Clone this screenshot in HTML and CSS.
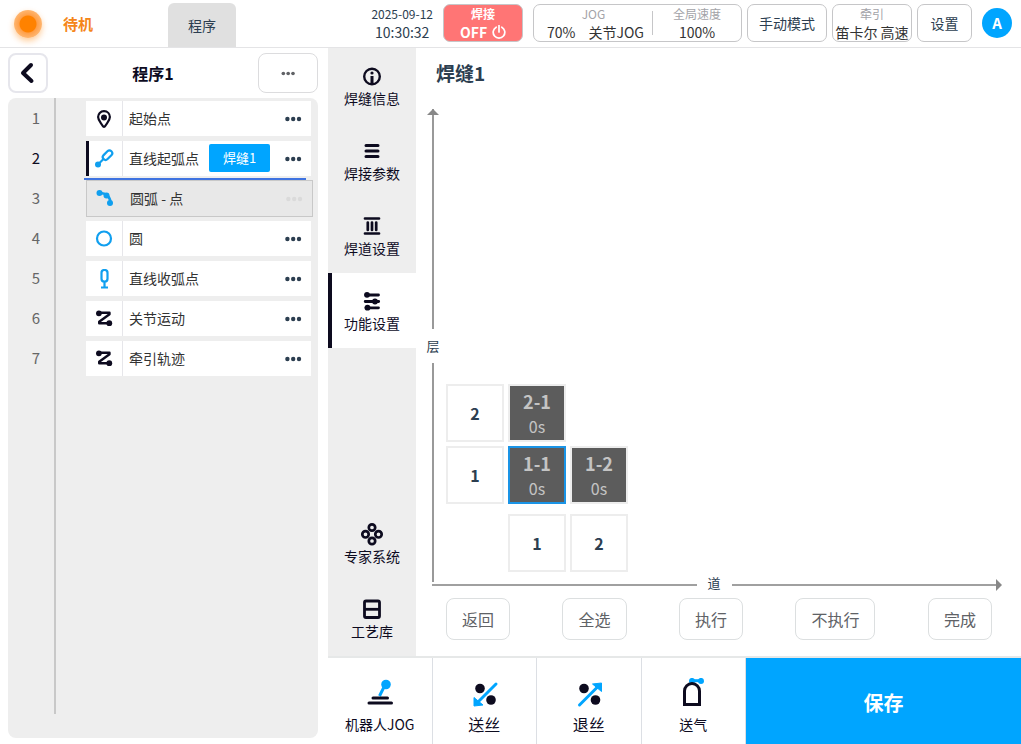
FILE: index.html
```html
<!DOCTYPE html>
<html lang="zh-CN">
<head>
    <meta charset="UTF-8">
    <meta name="viewport" content="width=device-width, initial-scale=1.0">
    <title>焊缝1</title>
    <link rel="stylesheet" href="styles.css">
</head>
<body>
    <!-- Shared icons -->
    <svg class="sprite" aria-hidden="true">
        <symbol id="icon-dots" viewBox="0 0 18 6">
            <circle cx="3.400" cy="3" r="2.200"/><circle cx="9.200" cy="3" r="2.200"/><circle cx="15" cy="3" r="2.200"/>
        </symbol>
        <symbol id="icon-path" viewBox="0 0 20 20">
            <path d="M4.500 3.800H15.500V5.200L5.200 12.800V14.300H15" fill="none" stroke="currentColor" stroke-width="2.400" stroke-linejoin="round"/>
            <circle cx="4.900" cy="4.300" r="2.900"/><circle cx="15.300" cy="14.200" r="2.900"/>
        </symbol>
    </svg>

    <!-- Top bar -->
    <header class="topbar">
        <span class="lamp"></span>
        <span class="status">待机</span>
        <a class="tab" href="#">程序</a>

        <div class="top-tools">
            <div class="clock">
                <span class="small">2025-09-12</span>
                <span>10:30:32</span>
            </div>
            <button class="top-box weld">
                <span class="small">焊接</span>
                <span class="weld-state">OFF
                    <svg class="power" viewBox="0 0 14 14"><path d="M4.200 2.200A5.800 5.800 0 1 0 9.800 2.200M7 .5V7" fill="none" stroke="currentColor" stroke-width="1.700" stroke-linecap="round"/></svg>
                </span>
            </button>
            <button class="top-box speed">
                <span class="speed-part">
                    <span class="small muted">JOG</span>
                    <span class="speed-values"><span>70%</span><span>关节JOG</span></span>
                </span>
                <span class="speed-part">
                    <span class="small muted">全局速度</span>
                    <span>100%</span>
                </span>
            </button>
            <button class="top-box mode">手动模式</button>
            <button class="top-box mode">
                <span class="small muted">牵引</span>
                <span class="value">笛卡尔 高速</span>
            </button>
            <button class="top-box settings">设置</button>
            <button class="avatar">A</button>
        </div>
    </header>

    <div class="page">
        <!-- Program list -->
        <section class="program">
            <div class="program-head">
                <button class="back" aria-label="返回">
                    <svg viewBox="0 0 20 22"><path d="M13 3 5 11l8.500 8" fill="none" stroke="currentColor" stroke-width="4" stroke-linecap="round" stroke-linejoin="round"/></svg>
                </button>
                <h1>程序1</h1>
                <button class="more" aria-label="更多">
                    <svg class="dots" viewBox="0 0 18 6"><use href="#icon-dots"/></svg>
                </button>
            </div>

            <div class="program-body">
                <ol class="steps">
                    <li class="step">
                        <span class="num">1</span>
                        <div class="card">
                            <span class="card-icon">
                                <svg viewBox="0 0 20 20"><path d="M10 2.200c-3.500 0-5.900 2.600-5.900 5.900 0 3.700 3.400 6.300 4.700 9 .5 1 1.900 1 2.400 0 1.300-2.700 4.700-5.300 4.700-9 0-3.300-2.400-5.900-5.900-5.900z" fill="none" stroke="currentColor" stroke-width="2.200"/><circle cx="10" cy="8.500" r="3"/></svg>
                            </span>
                            <span class="name">起始点</span>
                            <button class="card-more" aria-label="更多"><svg class="dots" viewBox="0 0 18 6"><use href="#icon-dots"/></svg></button>
                        </div>
                    </li>
                    <li class="step active">
                        <span class="num">2</span>
                        <div class="card">
                            <span class="card-icon blue">
                                <svg viewBox="0 0 20 20"><rect x="8" y="3.400" width="11" height="5.600" rx="2.800" transform="rotate(-45 13.500 6.200)" fill="none" stroke="currentColor" stroke-width="2.200"/><path d="M4 15.500 10 9.500" stroke="currentColor" stroke-width="2.200"/><circle cx="4" cy="15.500" r="3"/></svg>
                            </span>
                            <span class="name">直线起弧点</span>
                            <button class="tag">焊缝1</button>
                            <button class="card-more" aria-label="更多"><svg class="dots" viewBox="0 0 18 6"><use href="#icon-dots"/></svg></button>
                        </div>
                    </li>
                    <li class="step dragging">
                        <span class="num">3</span>
                        <div class="card">
                            <span class="card-icon blue">
                                <svg viewBox="0 0 20 20"><path d="M4 4Q15.500 4 15.500 15" fill="none" stroke="currentColor" stroke-width="2.600"/><circle cx="4.500" cy="4" r="3"/><circle cx="11.500" cy="6.500" r="3"/><circle cx="15" cy="14" r="3"/></svg>
                            </span>
                            <span class="name">圆弧 - 点</span>
                            <button class="card-more" aria-label="更多"><svg class="dots" viewBox="0 0 18 6"><use href="#icon-dots"/></svg></button>
                        </div>
                    </li>
                    <li class="step">
                        <span class="num">4</span>
                        <div class="card">
                            <span class="card-icon blue">
                                <svg viewBox="0 0 20 20"><circle cx="10" cy="9.500" r="7" fill="none" stroke="currentColor" stroke-width="2.200"/></svg>
                            </span>
                            <span class="name">圆</span>
                            <button class="card-more" aria-label="更多"><svg class="dots" viewBox="0 0 18 6"><use href="#icon-dots"/></svg></button>
                        </div>
                    </li>
                    <li class="step">
                        <span class="num">5</span>
                        <div class="card">
                            <span class="card-icon blue">
                                <svg viewBox="0 0 20 20"><rect x="7.500" y="1" width="6" height="11.500" rx="2.800" fill="none" stroke="currentColor" stroke-width="2.200"/><path d="M10.500 12.500V18.500M7 18.500h7" stroke="currentColor" stroke-width="2.200"/></svg>
                            </span>
                            <span class="name">直线收弧点</span>
                            <button class="card-more" aria-label="更多"><svg class="dots" viewBox="0 0 18 6"><use href="#icon-dots"/></svg></button>
                        </div>
                    </li>
                    <li class="step">
                        <span class="num">6</span>
                        <div class="card">
                            <span class="card-icon"><svg viewBox="0 0 20 20"><use href="#icon-path"/></svg></span>
                            <span class="name">关节运动</span>
                            <button class="card-more" aria-label="更多"><svg class="dots" viewBox="0 0 18 6"><use href="#icon-dots"/></svg></button>
                        </div>
                    </li>
                    <li class="step">
                        <span class="num">7</span>
                        <div class="card">
                            <span class="card-icon"><svg viewBox="0 0 20 20"><use href="#icon-path"/></svg></span>
                            <span class="name">牵引轨迹</span>
                            <button class="card-more" aria-label="更多"><svg class="dots" viewBox="0 0 18 6"><use href="#icon-dots"/></svg></button>
                        </div>
                    </li>
                </ol>
            </div>
        </section>

        <div class="workspace">
            <div class="workspace-main">
                <!-- Side menu -->
                <nav class="side">
                    <a href="#">
                        <svg viewBox="0 0 20 20"><circle cx="10" cy="10.500" r="7.800" fill="none" stroke="currentColor" stroke-width="2.400"/><circle cx="10" cy="7" r="1.600"/><path d="M10 10v7" stroke="currentColor" stroke-width="3"/></svg>
                        焊缝信息
                    </a>
                    <a href="#">
                        <svg viewBox="0 0 20 20"><path d="M4 4.500h12M4 10h12M4 15.500h12" stroke="currentColor" stroke-width="3" stroke-linecap="round"/></svg>
                        焊接参数
                    </a>
                    <a href="#">
                        <svg viewBox="0 0 20 20"><path d="M3 2.500h14M3 17.500h14M5.800 6.500v7.500M10 6.500v7.500M14.200 6.500v7.500" stroke="currentColor" stroke-width="2.700" stroke-linecap="round"/></svg>
                        焊道设置
                    </a>
                    <a class="current" href="#">
                        <svg viewBox="0 0 20 20"><path d="M4 4h12.500M3.200 10.500h13.500M4 16.800h12.500" stroke="currentColor" stroke-width="2.800" stroke-linecap="round"/><circle cx="5" cy="3.800" r="2.900"/><circle cx="13" cy="10.500" r="2.900"/><circle cx="5.500" cy="16.700" r="2.900"/></svg>
                        功能设置
                    </a>
                    <a class="side-low" href="#">
                        <svg class="wide" viewBox="0 0 24 24"><g fill="none" stroke="currentColor" stroke-width="2.700"><circle cx="12" cy="5.500" r="3.200"/><circle cx="5.500" cy="12.300" r="3.200"/><circle cx="18.500" cy="12.300" r="3.200"/><circle cx="12" cy="19" r="3.200"/></g></svg>
                        专家系统
                    </a>
                    <a href="#">
                        <svg viewBox="0 0 20 20"><rect x="2.500" y="2" width="15" height="16.500" rx="1.500" fill="none" stroke="currentColor" stroke-width="2.800"/><path d="M3 10.300h14" stroke="currentColor" stroke-width="2.800"/></svg>
                        工艺库
                    </a>
                </nav>

                <!-- Weld layers -->
                <main class="weld-area">
                    <h2>焊缝1</h2>
                    <div class="plot">
                        <div class="axis-y">
                            <span class="line with-arrow"></span>
                            <span class="axis-label">层</span>
                            <span class="line"></span>
                        </div>
                        <div class="beads">
                            <div class="bead-row">
                                <button class="bead">2</button>
                                <button class="bead off"><b>2-1</b><span>0s</span></button>
                            </div>
                            <div class="bead-row">
                                <button class="bead">1</button>
                                <button class="bead off selected"><b>1-1</b><span>0s</span></button>
                                <button class="bead off"><b>1-2</b><span>0s</span></button>
                            </div>
                            <div class="bead-row bead-foot">
                                <button class="bead">1</button>
                                <button class="bead">2</button>
                            </div>
                        </div>
                    </div>
                    <div class="axis-x">
                        <span class="line"></span>
                        <span class="axis-label">道</span>
                        <span class="line"></span>
                        <span class="arrow-right"></span>
                    </div>
                    <div class="actions">
                        <button>返回</button>
                        <button>全选</button>
                        <button>执行</button>
                        <button>不执行</button>
                        <button>完成</button>
                    </div>
                </main>
            </div>

            <!-- Bottom bar -->
            <footer class="bottom">
                <button class="tool">
                    <svg viewBox="0 0 30 30"><path class="blue" d="M14.500 18 20 7" stroke="currentColor" stroke-width="3"/><circle class="blue" cx="21" cy="6.500" r="4.800"/><path d="M8 20h14.500M4 25h22.500" stroke="currentColor" stroke-width="3" stroke-linecap="round"/></svg>
                    机器人JOG
                </button>
                <button class="tool large">
                    <svg viewBox="0 0 30 30"><circle cx="11" cy="10.500" r="4.800"/><circle cx="22" cy="22" r="4.800"/><path class="blue" d="M27 6 9 24" stroke="currentColor" stroke-width="3" stroke-linecap="round"/><path class="blue" d="M5 28V19.500l9 7.500z" stroke="currentColor" stroke-linejoin="round"/></svg>
                    送丝
                </button>
                <button class="tool large">
                    <svg viewBox="0 0 30 30"><circle cx="10" cy="10.500" r="4.800"/><circle cx="21.500" cy="22" r="4.800"/><path class="blue" d="M5.500 27 24 8.500" stroke="currentColor" stroke-width="3" stroke-linecap="round"/><path class="blue" d="M27.500 5V13.500l-9-7.500z" stroke="currentColor" stroke-linejoin="round"/></svg>
                    退丝
                </button>
                <button class="tool">
                    <svg viewBox="0 0 30 30"><path class="blue" d="M14 2.700h9" stroke="currentColor" stroke-width="3"/><circle class="blue" cx="14" cy="2.900" r="3"/><circle class="blue" cx="23" cy="2.900" r="3"/><path d="M6.500 26.500V13a7.500 7.500 0 0 1 15 0V26.500z" fill="none" stroke="currentColor" stroke-width="3"/></svg>
                    送气
                </button>
                <button class="save">保存</button>
            </footer>
        </div>
    </div>
</body>
</html>
```
FILE: styles.css
```css
/* Basic Reset */
* {
    margin: 0;
    padding: 0;
    box-sizing: border-box;
}

/* Global Styles */
body {
    display: flex;
    flex-direction: column;
    min-height: 100vh;
    font-family: "Noto Sans CJK SC", sans-serif;
    font-size: 14px;
    line-height: 18px;
    color: #2c3e50;
    background-color: #fff;
}

button {
    font: inherit;
    color: inherit;
    background-color: #fff;
    border: none;
    cursor: pointer;
}

a {
    color: inherit;
    text-decoration: none;
}

svg {
    display: block;
    fill: currentColor;
}

.sprite {
    display: none;
}

.blue {
    color: #109fef;
}

.small {
    font-size: 12px;
}

.muted {
    color: #a3a3a8;
}

/* Top Bar */
.topbar {
    display: flex;
    align-items: center;
    height: 48px;
    padding: 0 9px 0 14px;
    border-bottom: 1px solid #e4e4e6;
}

.lamp {
    width: 28px;
    height: 28px;
    border-radius: 50%;
    background: radial-gradient(circle, #ff8200 8px, #ffa04a 9px, #ffb670 14px);
    box-shadow: 0 3px 6px rgba(255, 130, 0, 0.4);
}

.status {
    margin-left: 21px;
    font-size: 15px;
    font-weight: bold;
    color: #f5861a;
}

.tab {
    align-self: flex-end;
    width: 68px;
    height: 44px;
    margin-left: 75px;
    border-radius: 6px 6px 0 0;
    background-color: #e0e0e0;
    line-height: 44px;
    text-align: center;
}

.top-tools {
    display: flex;
    align-items: center;
    gap: 5px;
    margin: 0 0 1px auto;
}

.clock {
    display: flex;
    flex-direction: column;
    align-items: center;
    margin-right: 5px;
}

.top-box {
    display: flex;
    flex-direction: column;
    align-items: center;
    justify-content: center;
    height: 38px;
    border: 1px solid #c6c6c8;
    border-radius: 7px;
    white-space: nowrap;
}

.weld {
    width: 80px;
    margin-right: 5px;
    background-color: #ff7575;
    color: #fff;
    font-weight: bold;
}

.weld-state {
    display: flex;
    align-items: center;
    gap: 5px;
}

.power {
    width: 14px;
    height: 14px;
}

.speed {
    flex-direction: row;
    width: 209px;
    color: #333;
}

.speed-part {
    display: flex;
    flex-direction: column;
    align-items: center;
    width: 88px;
}

.speed-part:first-child {
    position: relative;
    width: 119px;
}

.speed-part:first-child::after {
    content: "";
    position: absolute;
    top: 6px;
    right: 0;
    width: 1px;
    height: 24px;
    background-color: #c6c6c8;
}

.speed-values {
    display: flex;
    gap: 13px;
    padding-left: 4px;
}

.mode {
    width: 80px;
}

.value {
    color: #333;
}

.settings {
    width: 55px;
}

.avatar {
    width: 30px;
    height: 30px;
    margin-left: 5px;
    border-radius: 50%;
    background-color: #00a5ff;
    color: #fff;
    font-size: 15px;
    font-weight: bold;
}

/* Page */
.page {
    display: flex;
    flex: 1;
}

/* Program List */
.program {
    display: flex;
    flex-direction: column;
    width: 328px;
    padding: 5px 10px 6px 8px;
}

.program-head {
    display: flex;
    align-items: center;
    justify-content: space-between;
    height: 40px;
    margin-bottom: 5px;
}

.program-head h1 {
    font-size: 16px;
    color: #0d0b1f;
}

.back {
    display: flex;
    align-items: center;
    justify-content: center;
    width: 40px;
    height: 40px;
    border: 2px solid #e6e6ec;
    border-radius: 8px;
    color: #0d0b1f;
}

.back svg {
    width: 20px;
    height: 22px;
}

.more {
    display: flex;
    align-items: center;
    justify-content: center;
    width: 60px;
    height: 40px;
    border: 1px solid #dcdcde;
    border-radius: 8px;
    color: #606266;
}

.dots {
    width: 18px;
    height: 6px;
}

.more .dots {
    width: 16px;
    height: 5px;
}

.program-body {
    flex: 1;
    padding-bottom: 24px;
    border-radius: 8px;
    background: #eee;
}

.steps {
    display: flex;
    flex-direction: column;
    gap: 5px;
    height: 100%;
    padding: 3px 7px 0 0;
    background: linear-gradient(#c8c8c8, #c8c8c8) 46px 0 / 2px 100% no-repeat;
    list-style: none;
}

.step {
    position: relative;
    display: flex;
    align-items: center;
    height: 35px;
}

.num {
    width: 78px;
    padding: 0 22px 2px 0;
    font-size: 15px;
    text-align: center;
    color: #666;
}

.active .num {
    color: #0d0b1f;
}

.card {
    display: flex;
    flex: 1;
    align-items: center;
    height: 35px;
    background-color: #fff;
    color: #333;
}

.card-icon {
    display: flex;
    align-items: center;
    justify-content: center;
    align-self: stretch;
    width: 37px;
    border-right: 1px solid #e6e6ea;
    color: #0d0b1f;
}

.card-icon.blue {
    color: #109fef;
}

.card-icon svg {
    width: 20px;
    height: 20px;
}

.name {
    margin-left: 6px;
    padding-bottom: 2px;
}

.card-more {
    margin-left: auto;
    padding: 0 9px;
    background-color: transparent;
    color: #2c3e50;
}

.active .card {
    box-shadow: inset 3px 0 0 #0d0b1f;
}

.tag {
    height: 28px;
    margin: 0 0 1px 10px;
    padding: 0 14px;
    border-radius: 2px;
    background-color: #00a5ff;
    color: #fff;
    font-size: 13px;
}

.dragging .card {
    height: 37px;
    margin-right: -2px;
    border: 1px solid #c8c8c8;
    background-color: #e8e8e8;
}

.dragging .card-icon {
    border-color: transparent;
}

.dragging .card-more {
    color: #dadada;
}

/* Drop position */
.active::after {
    content: "";
    position: absolute;
    right: 5px;
    bottom: -4px;
    left: 76px;
    z-index: 1;
    height: 2px;
    background-color: #3f73e0;
}

/* Workspace */
.workspace {
    display: flex;
    flex: 1;
    flex-direction: column;
    min-width: 0;
}

.workspace-main {
    display: flex;
    flex: 1;
}

/* Side Menu */
.side {
    display: flex;
    flex-direction: column;
    width: 88px;
    background-color: #eee;
    color: #0d0b1f;
}

.side a {
    display: flex;
    flex-direction: column;
    align-items: center;
    gap: 3px;
    height: 75px;
    padding-top: 18px;
}

.side svg {
    width: 20px;
    height: 20px;
}

.side .wide {
    width: 24px;
    height: 24px;
    margin: -2px 0;
}

.side .current {
    background-color: #fff;
    box-shadow: inset 4px 0 0 #0d0b1f;
}

.side .side-low {
    margin-top: auto;
}

/* Weld Area */
.weld-area {
    display: flex;
    flex: 1;
    flex-direction: column;
    padding: 12px 19px 16px 9px;
}

.weld-area h2 {
    padding-left: 11px;
    font-size: 19px;
    line-height: 26px;
}

.plot {
    display: flex;
    flex: 1;
    margin-top: 23px;
}

.axis-y {
    display: flex;
    flex-direction: column;
    align-items: center;
    width: 16px;
}

.axis-y .line {
    flex: 1;
    width: 2px;
    background-color: #999;
}

.with-arrow {
    display: flex;
    justify-content: center;
}

.with-arrow::before {
    content: "";
    flex: none;
    align-self: flex-start;
    border: 6px solid transparent;
    border-top: none;
    border-bottom-color: #888;
}

.axis-label {
    font-size: 13px;
}

.axis-y .axis-label {
    padding: 8px 0;
}

.arrow-right {
    border: 6px solid transparent;
    border-right: none;
    border-left-color: #888;
}

.beads {
    display: flex;
    flex-direction: column;
    justify-content: flex-end;
    gap: 4px;
    padding: 0 0 10px 5px;
}

.bead-row {
    display: flex;
    gap: 4px;
}

.bead-foot {
    margin-top: 6px;
    padding-left: 62px;
}

.bead {
    display: flex;
    flex-direction: column;
    align-items: center;
    justify-content: center;
    gap: 3px;
    width: 58px;
    height: 58px;
    border: 2px solid #ededed;
    font-size: 16px;
    font-weight: bold;
    line-height: 22px;
}

.bead.off {
    background-color: #5c5c5c;
    color: #c4c4c4;
    font-weight: normal;
}

.bead b {
    font-size: 18px;
}

.bead.selected {
    border-color: #1a94e6;
}

.axis-x {
    display: flex;
    align-items: center;
    height: 2px;
    margin: 2px 0 12px 7px;
}

.axis-x .line {
    flex: 1;
    height: 2px;
    background-color: #a0a0a0;
}

.axis-x .axis-label {
    padding: 0 11px 4px;
}

/* Actions */
.actions {
    display: flex;
    justify-content: space-between;
    padding: 0 10px 0 21px;
}

.actions button {
    height: 42px;
    padding: 0 15px;
    border: 1px solid #dcdfe0;
    border-radius: 8px;
    color: #606266;
    font-size: 16px;
}

/* Bottom Bar */
.bottom {
    display: flex;
    height: 88px;
    border-top: 2px solid #e6e8e8;
}

.tool {
    display: flex;
    flex: 32;
    flex-direction: column;
    align-items: center;
    gap: 7px;
    padding-top: 20px;
    border-right: 1px solid #dcdfe4;
    color: #0d0b1f;
    white-space: nowrap;
}

.tool svg {
    width: 30px;
    height: 30px;
}

.tool .blue {
    color: #00a5ff;
}

.tool.large {
    font-size: 16px;
}

.save {
    flex: 85;
    padding-top: 4px;
    background-color: #00a5ff;
    color: #fff;
    font-size: 20px;
    font-weight: bold;
}
```
